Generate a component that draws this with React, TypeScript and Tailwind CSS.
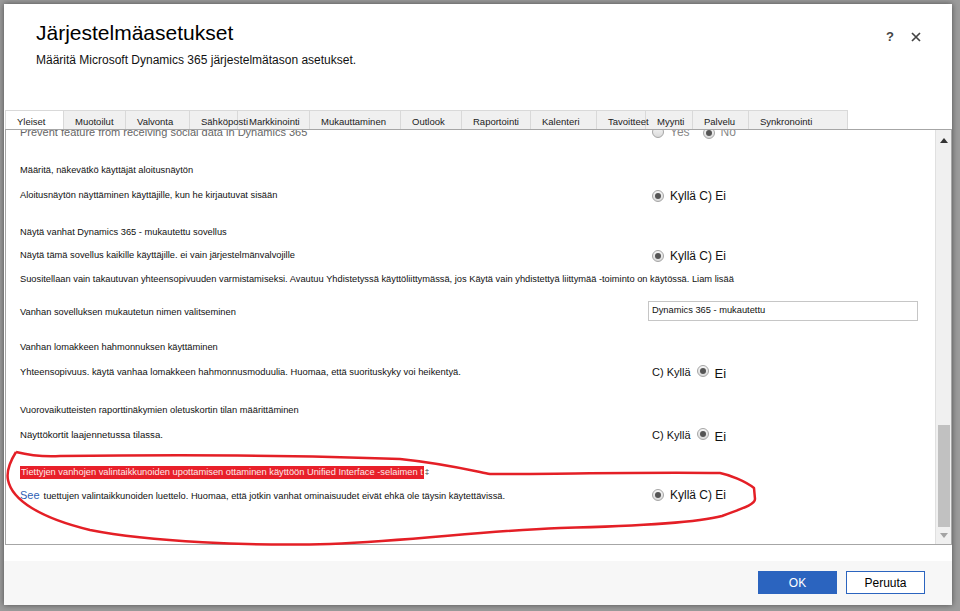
import React from 'react';

const tabs = [
  { label: 'Yleiset', w: 'w-[58px]', active: true },
  { label: 'Muotoilut', w: 'w-[62px]' },
  { label: 'Valvonta', w: 'w-[64px]' },
  { label: 'Sähköposti', w: 'w-[48px]' },
  { label: 'Markkinointi', w: 'w-[72px]' },
  { label: 'Mukauttaminen', w: 'w-[91px]' },
  { label: 'Outlook', w: 'w-[61px]' },
  { label: 'Raportointi', w: 'w-[69px]' },
  { label: 'Kalenteri', w: 'w-[66px]' },
  { label: 'Tavoitteet', w: 'w-[49px]' },
  { label: 'Myynti', w: 'w-[47px]' },
  { label: 'Palvelu', w: 'w-[56px]' },
  { label: 'Synkronointi', w: 'w-[99px]' },
];

function Radio({ checked }: { checked?: boolean }) {
  return (
    <span className="inline-flex h-[12px] w-[12px] shrink-0 items-center justify-center rounded-full border border-[#a5a5a5] bg-gradient-to-b from-[#f6f6f6] to-[#dadada]">
      {checked && <span className="h-[6px] w-[6px] rounded-full bg-[#555]" />}
    </span>
  );
}

function YesFirst() {
  return (
    <div className="flex items-center gap-[6px] pl-[4px] text-[12px] text-[#111]">
      <Radio checked />
      <span>Kyllä C) Ei</span>
    </div>
  );
}

function NoChecked() {
  return (
    <div className="flex items-center pl-[4px] text-[#111]">
      <span className="text-[11px]">C) Kyllä</span>
      <span className="ml-[6px]"><Radio checked /></span>
      <span className="ml-[6px] pt-[3px] text-[13px]">Ei</span>
    </div>
  );
}

function Row({ mt, label, right, labelClass = '' }: { mt: string; label: React.ReactNode; right?: React.ReactNode; labelClass?: string }) {
  return (
    <div className={`flex h-[20px] items-center ${mt}`}>
      <div className={`w-[642px] shrink-0 whitespace-nowrap pl-[14px] ${labelClass}`}>{label}</div>
      <div className="flex-1">{right}</div>
    </div>
  );
}

export default function App() {
  return (
    <div className="relative h-[611px] w-[960px] overflow-hidden bg-[#9c9c9c] pl-[4px] pt-[4px] font-['Liberation_Sans',Arial,sans-serif]">
      <div className="flex h-[601px] w-[948px] flex-col bg-white shadow-[0_0_6px_rgba(0,0,0,0.5)]">
        {/* header */}
        <div className="relative h-[106px] shrink-0 pl-[32px] pt-[16px]">
          <h1 className="text-[21px] leading-[26px] text-black">Järjestelmäasetukset</h1>
          <p className="mt-[6px] text-[12px] leading-[16px] text-[#111]">Määritä Microsoft Dynamics 365 järjestelmätason asetukset.</p>
          <div className="absolute right-[31px] top-[23px] flex items-center gap-[17px] text-[#444]">
            <span className="text-[13px] font-bold">?</span>
            <svg width="10" height="10" viewBox="0 0 10 10">
              <path d="M1 1 L9 9 M9 1 L1 9" stroke="#444" strokeWidth="1.7" />
            </svg>
          </div>
        </div>

        {/* tabs */}
        <div className="ml-[1px] flex h-[19px] shrink-0">
          {tabs.map(t => (
            <div
              key={t.label}
              className={`${t.w} shrink-0 whitespace-nowrap border-l border-t border-[#d9d9d9] pl-[11px] pt-[5px] text-[9.5px] leading-[12px] text-[#222] ${t.active ? 'bg-white' : 'bg-[#f0f0f0]'}`}
            >
              <span className="relative z-10">{t.label}</span>
            </div>
          ))}
          <div className="w-px bg-[#d9d9d9]" />
        </div>

        {/* panel */}
        <div className="ml-[1px] flex h-[416px] w-[947px] shrink-0 border border-[#a6a6a6]">
          <div className="flex-1 overflow-hidden text-[9.3px] text-[#111]">
            <div className="flex flex-col">
              <div className="-mt-[8px] flex h-[20px] items-center">
                <div className="w-[642px] shrink-0 pl-[14px] text-[11px] text-[#666]">Prevent feature from receiving social data in Dynamics 365</div>
                <div className="flex items-center pl-[4px] text-[12px] text-[#888]">
                  <Radio />
                  <span className="ml-[6px]">Yes</span>
                  <span className="ml-[13px]"><Radio checked /></span>
                  <span className="ml-[6px]">No</span>
                </div>
              </div>
              <Row mt="mt-[19px]" label="Määritä, näkevätkö käyttäjät aloitusnäytön" />
              <Row mt="mt-[5px]" label="Aloitusnäytön näyttäminen käyttäjille, kun he kirjautuvat sisään" right={<YesFirst />} />
              <Row mt="mt-[17px]" label="Näytä vanhat Dynamics 365 - mukautettu sovellus" />
              <Row mt="mt-[3px]" label="Näytä tämä sovellus kaikille käyttäjille. ei vain järjestelmänvalvojille" right={<YesFirst />} />
              <div className="mt-[4px] flex h-[20px] items-center whitespace-nowrap pl-[14px]">
                Suositellaan vain takautuvan yhteensopivuuden varmistamiseksi. Avautuu Yhdistetyssä käyttöliittymässä, jos Käytä vain yhdistettyä liittymää -toiminto on käytössä. Liam lisää
              </div>
              <Row
                mt="mt-[11px]"
                labelClass="pt-[4px]"
                label="Vanhan sovelluksen mukautetun nimen valitseminen"
                right={
                  <div className="flex h-[20px] w-[270px] items-center border border-[#c6c6c6] pl-[3px]">
                    Dynamics 365 - mukautettu
                  </div>
                }
              />
              <Row mt="mt-[17px]" label="Vanhan lomakkeen hahmonnuksen käyttäminen" />
              <Row mt="mt-[4px]" labelClass="text-[9.4px]" label="Yhteensopivuus. käytä vanhaa lomakkeen hahmonnusmoduulia. Huomaa, että suorituskyky voi heikentyä." right={<NoChecked />} />
              <Row mt="mt-[19px]" label="Vuorovaikutteisten raporttinäkymien oletuskortin tilan määrittäminen" />
              <Row mt="mt-[4px]" labelClass="text-[9.6px]" label="Näyttökortit laajennetussa tilassa." right={<NoChecked />} />
              <Row
                mt="mt-[17px]"
                label={
                  <span className="flex items-center">
                    <span className="bg-[#e8202a] px-px leading-[13px] text-[#fde8e8]">Tiettyjen vanhojen valintaikkunoiden upottamisen ottaminen käyttöön Unified Interface -selaimen t</span>
                    <span className="ml-[1px] text-[8px] text-[#333]">‡</span>
                  </span>
                }
              />
              <Row
                mt="mt-[3px]"
                label={
                  <span>
                    <span className="text-[11px] text-[#2f5fb5]">See</span>
                    <span className="ml-[4px]">tuettujen valintaikkunoiden luettelo. Huomaa, että jotkin vanhat ominaisuudet eivät ehkä ole täysin käytettävissä.</span>
                  </span>
                }
                right={<YesFirst />}
              />
            </div>
          </div>

          {/* scrollbar */}
          <div className="flex w-[16px] shrink-0 flex-col items-center border-l border-[#e0e0e0] bg-[#f0f0f0]">
            <svg className="mt-[8px]" width="8" height="5" viewBox="0 0 8 5">
              <path d="M0 5 L4 0 L8 5 Z" fill="#333" />
            </svg>
            <div className="mt-[282px] h-[102px] w-[12px] bg-[#c1c1c1]" />
            <svg className="mt-[6px]" width="8" height="5" viewBox="0 0 8 5">
              <path d="M0 0 L8 0 L4 5 Z" fill="#a3a3a3" />
            </svg>
          </div>
        </div>

        <div className="h-[16px] shrink-0" />

        {/* footer */}
        <div className="flex flex-1 items-start justify-end gap-[9px] bg-[#f7f7f7] pr-[27px] pt-[10px]">
          <button className="h-[23px] w-[79px] bg-[#2b64bf] text-[12px] text-white">OK</button>
          <button className="h-[23px] w-[79px] border border-[#2b64bf] bg-white text-[12px] text-black">Peruuta</button>
        </div>
      </div>

      {/* hand-drawn annotation */}
      <svg className="pointer-events-none absolute left-0 top-0" width="960" height="611" viewBox="0 0 960 611">
        <path
          d="M16 452 C11 460 6 470 8 480 C12 500 40 518 90 530 C150 542 250 546 330 544 C420 540 480 531 560 528 C640 526 700 522 722 516 C740 509 755 505 755 499 L754 488 C745 481 730 475 720 473 C640 472 560 474 490 474 C470 470 440 463 400 459 C300 455 150 455 60 456 C40 457 28 455 16 452"
          fill="none"
          stroke="#e41f26"
          strokeWidth="2.5"
          strokeLinejoin="round"
        />
      </svg>
    </div>
  );
}
